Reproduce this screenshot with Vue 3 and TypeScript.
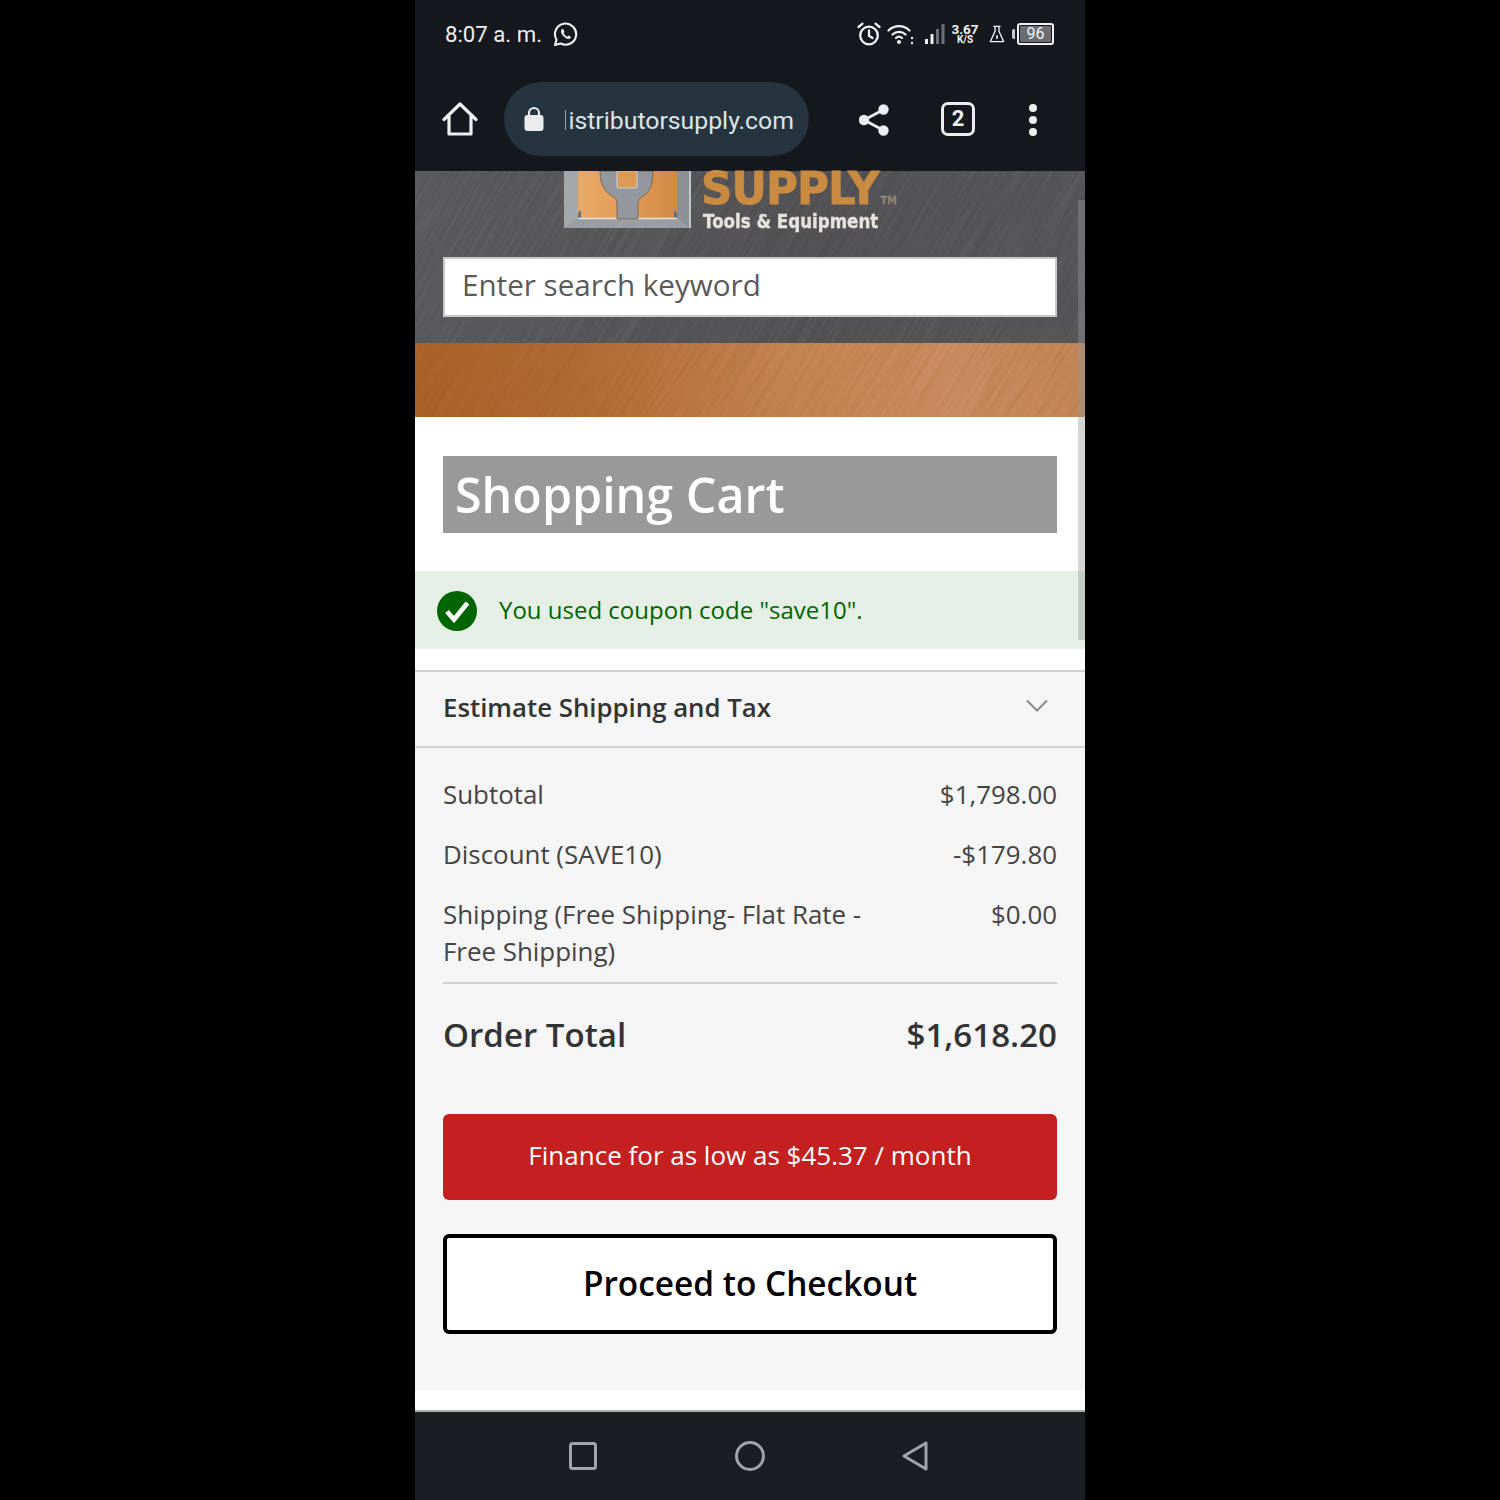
<script setup lang="ts">
const totals = [
  { label: 'Subtotal', value: '$1,798.00' },
  { label: 'Discount (SAVE10)', value: '-$179.80' },
  { label: 'Shipping (Free Shipping- Flat Rate - Free Shipping)', value: '$0.00' }
];
</script>

<template>
  <div class="screen">
    <div class="chrome">
      <div class="status">
        <div class="status-left">
          <span class="time">8:07 a. m.</span>
          <svg width="25" height="25" viewBox="0 0 26 26" fill="none">
            <path d="M2 24l1.7-5.6A11 11 0 1 1 8 22.4z" stroke="#eef0f1" stroke-width="2.2" stroke-linejoin="round" />
            <path d="M9.2 7.6c-1.4 1.3-1.2 3.6.6 6 1.9 2.6 4.6 4.3 6.7 4.1 1.2-.1 2.2-1 2.3-2.1l-2.8-1.5-1.2 1.3c-1.5-.6-3-2-3.8-3.6l1-1.3L10.7 7.4c-.5-.2-1.1-.2-1.5.2z" fill="#eef0f1" />
          </svg>
        </div>
        <div class="status-right">
          <svg width="26" height="26" viewBox="0 0 26 26" fill="none" stroke="#f2f3f4" stroke-width="2.3" stroke-linecap="round">
            <circle cx="13" cy="14.5" r="8.8" />
            <path d="M13 9.5v5.3l3.5 2.2M2.5 6l4-3.3M23.5 6l-4-3.3" />
          </svg>
          <svg class="ic-wifi" width="28" height="24" viewBox="0 0 28 24" fill="none" stroke="#f2f3f4" stroke-width="2.2" stroke-linecap="round">
            <path d="M1.5 8.5c6-5.8 15-5.8 21 0M5.5 12.5c3.7-3.5 9.3-3.5 13 0M9 16c1.8-1.6 4.2-1.6 6 0" />
            <circle cx="12" cy="20" r="2" fill="#f2f3f4" stroke="none" />
            <circle cx="25" cy="16" r="1.2" fill="#f2f3f4" stroke="none" />
            <circle cx="25" cy="21" r="1.2" fill="#f2f3f4" stroke="none" />
          </svg>
          <svg class="ic-signal" width="20" height="20" viewBox="0 0 20 20">
            <rect x="0" y="15" width="3" height="5" fill="#f2f3f4" />
            <rect x="5.5" y="10" width="3" height="10" fill="#f2f3f4" />
            <rect x="11" y="5" width="3" height="15" fill="#6e7173" />
            <rect x="16.5" y="0" width="3" height="20" fill="#6e7173" />
          </svg>
          <div class="speed"><span>3.67</span><span class="unit">K/S</span></div>
          <svg class="ic-flask" width="16" height="20" viewBox="0 0 18 20" fill="none" stroke="#f2f3f4" stroke-width="1.5" stroke-linejoin="round">
            <path d="M5 1.5h8M6.8 1.5V7L1.5 18.5h15L11.2 7V1.5" />
            <path d="M9 11.5v4" stroke-width="1.8" />
          </svg>
          <div class="battery">
            <i class="cap"></i>
            <div class="shell"><span class="level">96</span></div>
          </div>
        </div>
      </div>

      <div class="toolbar">
        <svg class="ic-home" width="36" height="34" viewBox="0 0 36 34" fill="none" stroke="#eceeef" stroke-width="3.2" stroke-linejoin="round" stroke-linecap="round">
          <path d="M2 17.5L18 2l16 15.5M7 14v18h22V14" />
        </svg>
        <div class="pill">
          <svg class="ic-lock" width="20" height="26" viewBox="0 0 20 26">
            <path d="M5 11V7a5 5 0 0 1 10 0v4" fill="none" stroke="#e9ebec" stroke-width="2.2" />
            <rect x="0.5" y="9" width="19" height="16" rx="3" fill="#e9ebec" />
          </svg>
          <i class="sliver"></i>
          <div class="url">istributorsupply.com</div>
        </div>
        <svg class="ic-share" width="30" height="32" viewBox="0 0 30 32" fill="#eceeef" stroke="#eceeef" stroke-width="2.8">
          <path d="M24 6L5 16l19 10" fill="none" />
          <circle cx="24.5" cy="5.5" r="3.8" />
          <circle cx="5" cy="16" r="3.8" />
          <circle cx="24.5" cy="26.5" r="3.8" />
        </svg>
        <div class="tabs">2</div>
        <div class="more"><i></i><i></i><i></i></div>
      </div>
    </div>

    <div class="page">
      <header class="site-head">
        <svg class="grain" width="670" height="172">
          <defs>
            <filter id="grey-grain" x="0" y="0" width="100%" height="100%">
              <feTurbulence type="fractalNoise" baseFrequency="0.012 0.45" numOctaves="2" seed="4" />
              <feColorMatrix type="matrix" values="0 0 0 0 1  0 0 0 0 1  0 0 0 0 1  0.14 0 0 0 -0.055" />
            </filter>
          </defs>
          <rect x="-300" y="-500" width="1300" height="1200" transform="rotate(-60 335 86)" filter="url(#grey-grain)" />
        </svg>
        <div class="logo">
          <svg class="logo-mark" width="127" height="57" viewBox="0 0 127 57">
            <defs>
              <linearGradient id="panel" x1="0" y1="0" x2="1" y2="0">
                <stop offset="0" stop-color="#eaa968" />
                <stop offset="0.5" stop-color="#e29c57" />
                <stop offset="1" stop-color="#d18945" />
              </linearGradient>
            </defs>
            <rect x="0" y="0" width="126" height="57" fill="#8d9195" />
            <path d="M0 0h14v47L0 57z" fill="#a4a8ab" />
            <path d="M0 57l14-10h99l13 10z" fill="#9a9ea2" />
            <rect x="14" y="0" width="99" height="47" fill="url(#panel)" />
            <path d="M14 47v-5l3-3v8zM113 47v-5l-3-3v8z" fill="#6c6f71" />
            <path d="M14 47.5h99" stroke="#e4e4e2" stroke-width="1.5" />
            <path d="M36 0C36 15 42 22 50 26C53 28 53 32 53 36V48H74V36C74 32 74 28 78 26C85 22 89 15 89 0z" fill="#92989d" stroke="#6f5a45" stroke-width="0.8" />
            <path d="M53 0V14Q53 17 56 17H70Q73 17 73 14V0z" fill="#dd9a55" stroke="#c6c8c9" stroke-width="1.2" />
            <rect x="125" y="0" width="2" height="57" fill="#c3c6c8" />
          </svg>
          <div class="logo-text">
            <div class="supply">SUPPLY<span class="tm">TM</span></div>
            <div class="tools">Tools &amp; Equipment</div>
          </div>
        </div>
        <div class="search">Enter search keyword</div>
      </header>
      <div class="copper">
        <svg class="grain" width="670" height="74">
          <defs>
            <filter id="copper-grain" x="0" y="0" width="100%" height="100%">
              <feTurbulence type="fractalNoise" baseFrequency="0.01 0.3" numOctaves="3" seed="9" />
              <feColorMatrix type="matrix" values="0 0 0 0 0.2  0 0 0 0 0.08  0 0 0 0 0  0.3 0 0 0 -0.1" />
            </filter>
          </defs>
          <rect x="-300" y="-500" width="1300" height="1100" transform="rotate(-58 335 37)" filter="url(#copper-grain)" />
        </svg>
      </div>

      <main class="content">
        <h1 class="title">Shopping Cart</h1>
        <div class="notice">
          <svg width="40" height="40" viewBox="0 0 40 40">
            <circle cx="20" cy="20" r="20" fill="#006400" />
            <path d="M10 20.5l7 8L30.5 12" fill="none" stroke="#fff" stroke-width="4.8" />
          </svg>
          <span>You used coupon code "save10".</span>
        </div>

        <section class="summary">
          <div class="estimate">
            <span>Estimate Shipping and Tax</span>
            <svg width="22" height="14" viewBox="0 0 22 14" fill="none" stroke="#8a8a8a" stroke-width="2">
              <path d="M1 1.5l10 10 10-10" />
            </svg>
          </div>
          <div class="totals">
            <div v-for="row in totals" :key="row.label" class="row">
              <span class="label">{{ row.label }}</span>
              <span>{{ row.value }}</span>
            </div>
          </div>
          <div class="grand">
            <span>Order Total</span>
            <span>$1,618.20</span>
          </div>
          <button class="finance">Finance for as low as $45.37 / month</button>
          <button class="checkout">Proceed to Checkout</button>
        </section>
        <div class="tail"></div>
      </main>
      <div class="scrollbar"></div>
    </div>

    <nav class="nav">
      <svg width="28" height="28" viewBox="0 0 28 28" fill="none" stroke="#a2a5a7" stroke-width="3" stroke-linejoin="round">
        <rect x="1.5" y="1.5" width="25" height="25" rx="2" />
      </svg>
      <svg width="30" height="30" viewBox="0 0 30 30" fill="none" stroke="#a2a5a7" stroke-width="3">
        <circle cx="15" cy="15" r="13.5" />
      </svg>
      <svg width="26" height="30" viewBox="0 0 26 30" fill="none" stroke="#a2a5a7" stroke-width="3" stroke-linejoin="round">
        <path d="M24 2v26L2 15z" />
      </svg>
    </nav>
  </div>
</template>

<style>
html, body {
  margin: 0;
  background: #000;
}
</style>

<style scoped>
.screen {
  width: 670px;
  height: 1500px;
  margin: 0 auto;
  display: flex;
  flex-direction: column;
  font-family: "Open Sans", sans-serif;
}

.chrome {
  height: 171px;
  background: #15191e;
  color: #eef0f1;
  font-family: Roboto, sans-serif;
  flex-shrink: 0;
}

.status {
  height: 68px;
  padding: 0 31px 0 30px;
  display: flex;
  justify-content: space-between;
  align-items: center;
}

.status-left { display: flex; align-items: center; gap: 11px; }
.time { font-size: 22.2px; }

.status-right { display: flex; align-items: center; }
.ic-wifi { margin-left: 5px; }
.ic-signal { margin-left: 10px; }
.ic-flask { margin-left: 11px; }

.speed {
  width: 26px;
  margin-left: 7px;
  display: flex;
  flex-direction: column;
  align-items: center;
  font-size: 13.5px;
  font-weight: 700;
  line-height: 12px;
  color: #f2f3f4;
}
.speed .unit { font-size: 10px; line-height: 10px; }

.battery { margin-left: 7px; display: flex; align-items: center; gap: 2px; }
.cap { width: 3px; height: 10px; background: #c8cacb; border-radius: 2px 0 0 2px; }
.shell {
  width: 31px;
  height: 16px;
  border: 2px solid #f0f1f2;
  border-radius: 3px;
  padding: 1px;
  display: flex;
}
.level {
  flex: 1;
  background: #6b6d70;
  color: #f2f3f4;
  font-size: 16px;
  line-height: 16px;
  text-align: center;
}

.toolbar {
  height: 103px;
  padding: 0 0 15px 27px;
  box-sizing: border-box;
  display: flex;
  align-items: flex-start;
}
.ic-home { margin-top: 34px; }
.pill {
  width: 305px;
  height: 74px;
  margin: 14px 0 0 26px;
  padding: 0 15px 0 20px;
  box-sizing: border-box;
  background: #25343e;
  border-radius: 37px;
  display: flex;
  align-items: center;
  flex-shrink: 0;
}
.ic-lock { flex-shrink: 0; }
.sliver {
  width: 1px;
  height: 20px;
  margin: 2px 2px 0 auto;
  background: #9aa3a8;
}
.url {
  padding-top: 3px;
  line-height: 28px;
  white-space: nowrap;
  font-size: 24.8px;
  color: #dfe3e5;
}
.ic-share { margin: 36px 0 0 50px; }
.tabs {
  width: 34px;
  height: 34px;
  margin: 34px 0 0 52px;
  box-sizing: border-box;
  border: 3px solid #eceeef;
  border-radius: 7px;
  text-align: center;
  font-size: 22px;
  font-weight: 700;
  line-height: 28px;
}
.more {
  margin: 36px 0 0 54px;
  display: flex;
  flex-direction: column;
  gap: 4px;
}
.more i { width: 8px; height: 8px; border-radius: 50%; background: #eceeef; }

.page {
  flex: 1;
  position: relative;
  background: #fff;
  display: flex;
  flex-direction: column;
}

.site-head {
  position: relative;
  height: 172px;
  box-sizing: border-box;
  padding: 0 28px;
  background: linear-gradient(90deg, #58585a, #505052 60%, #545456);
}

.grain {
  position: absolute;
  left: 0;
  top: 0;
}

.logo {
  position: relative;
  height: 86px;
  display: flex;
  padding-left: 121px;
}
.logo-mark { margin-right: 10px; flex-shrink: 0; }
.supply {
  margin-top: 1px;
  font-family: "DejaVu Sans", sans-serif;
  font-size: 45px;
  font-weight: 700;
  line-height: 34px;
  letter-spacing: -1px;
  color: #c98a42;
  -webkit-text-stroke: 0.8px #c98a42;
  transform: scaleX(0.97);
  transform-origin: left;
  white-space: nowrap;
}
.tm {
  margin-left: 2px;
  font-size: 10px;
  line-height: 0;
  letter-spacing: 0;
  color: #8f8577;
  -webkit-text-stroke: 0.3px #8f8577;
}
.tools {
  margin: 5px 0 0 2px;
  font-family: "DejaVu Sans", sans-serif;
  font-size: 19.4px;
  font-weight: 700;
  line-height: 22px;
  color: #e6e2dc;
  -webkit-text-stroke: 0.4px #e6e2dc;
  transform: scaleX(0.86);
  transform-origin: left;
  white-space: nowrap;
}

.search {
  position: relative;
  height: 60px;
  box-sizing: border-box;
  background: #fff;
  border: 2px solid #c8c8c8;
  padding-left: 17px;
  font-size: 29.6px;
  line-height: 52px;
  color: #5a5a5a;
}

.copper {
  position: relative;
  height: 74px;
  flex-shrink: 0;
  background: linear-gradient(90deg, #ad6229 0%, #b36a34 25%, #c58454 55%, #cb8d62 80%, #c48658 100%);
}

.content {
  flex: 1;
  display: flex;
  flex-direction: column;
  padding-top: 39px;
}

.title {
  margin: 0 28px;
  height: 77px;
  padding-left: 12px;
  background: #999;
  color: #fff;
  font-size: 48.4px;
  font-weight: 600;
  line-height: 77px;
}

.notice {
  margin-top: 38px;
  height: 78px;
  padding-left: 22px;
  background: #e5efe5;
  color: #006400;
  display: flex;
  align-items: center;
  gap: 22px;
  font-size: 24px;
}
.notice svg { margin-top: 2px; }
.notice span { padding-bottom: 2px; }

.summary {
  margin-top: 21px;
  flex: 1;
  background: #f5f5f5;
  border-top: 2px solid #d1d1d1;
  display: flex;
  flex-direction: column;
}

.estimate {
  height: 70px;
  padding: 0 28px 4px;
  border-bottom: 2px solid #d1d1d1;
  display: flex;
  justify-content: space-between;
  align-items: center;
  font-size: 25.8px;
  font-weight: 600;
  color: #333;
}
.estimate svg { margin: 0 9px 2px 0; }

.totals {
  margin: 0 28px;
  padding: 28px 0 12px;
  border-bottom: 2px solid #d1d1d1;
  display: flex;
  flex-direction: column;
  gap: 23px;
}
.row {
  display: flex;
  justify-content: space-between;
  font-size: 25.9px;
  line-height: 37px;
  color: #444;
}
.label { max-width: 430px; }

.grand {
  margin: 28px 28px 0;
  display: flex;
  justify-content: space-between;
  font-size: 33.1px;
  font-weight: 600;
  line-height: 45px;
  color: #333;
}

.finance,
.checkout {
  margin: 0 28px;
  font-family: inherit;
  box-sizing: border-box;
  border-radius: 6px;
}
.finance {
  margin-top: 57px;
  height: 86px;
  padding-bottom: 6px;
  border: none;
  background: #c4201f;
  color: #fff;
  font-size: 26px;
}
.checkout {
  margin-top: 34px;
  height: 100px;
  padding-bottom: 4px;
  border: 4px solid #000;
  background: #fff;
  color: #000;
  font-size: 33.4px;
  font-weight: 600;
}

.tail { height: 20px; flex-shrink: 0; background: #fff; }

.scrollbar {
  position: absolute;
  right: 0;
  top: 29px;
  width: 7px;
  height: 440px;
  background: rgba(150, 150, 150, 0.4);
}

.nav {
  height: 90px;
  flex-shrink: 0;
  box-sizing: border-box;
  background: #1a1e21;
  border-top: 2px solid #a9adb0;
  padding: 0 157px 0 154px;
  display: flex;
  justify-content: space-between;
  align-items: center;
}
</style>
